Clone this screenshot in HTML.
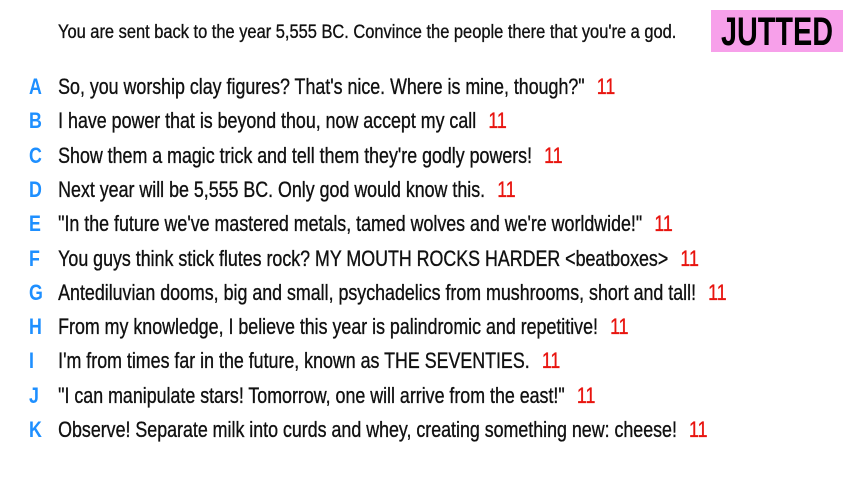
<!DOCTYPE html>
<html><head><meta charset="utf-8"><style>
html,body{margin:0;padding:0;width:853px;height:480px;background:#fff;overflow:hidden}
body{font-family:"Liberation Sans",sans-serif;color:#111;position:relative}
.h{position:absolute;left:58px;top:22px;font-size:19px;white-space:nowrap;transform:scaleX(0.865);transform-origin:0 0;-webkit-text-stroke:0.35px #111}
.b{position:absolute;left:711px;top:10px;width:132px;height:42px;background:#f7a0ea;overflow:hidden}
.b span{position:absolute;left:50%;top:0;font-size:40px;font-weight:bold;line-height:44px;color:#000;transform:translateX(-50%) scaleX(0.72);white-space:nowrap}
.r{position:absolute;left:29px;height:30px;font-size:22px;white-space:nowrap;line-height:30px;transform:scaleX(0.81);transform-origin:0 0;-webkit-text-stroke:0.35px #111}
.l{position:absolute;left:0;color:#1e8fff;font-weight:bold;-webkit-text-stroke:0}
.t{position:absolute;left:36px}
.n{color:#e8140f;margin-left:15px;-webkit-text-stroke:0.35px #e8140f}
</style></head><body>
<div class="h">You are sent back to the year 5,555 BC. Convince the people there that you're a god.</div>
<div class="b"><span>JUTTED</span></div>
<div class="r" style="top:72px"><span class="l">A</span><span class="t">So, you worship clay figures? That's nice. Where is mine, though?"<span class="n">11</span></span></div>
<div class="r" style="top:106px"><span class="l">B</span><span class="t">I have power that is beyond thou, now accept my call<span class="n">11</span></span></div>
<div class="r" style="top:141px"><span class="l">C</span><span class="t">Show them a magic trick and tell them they're godly powers!<span class="n">11</span></span></div>
<div class="r" style="top:175px"><span class="l">D</span><span class="t">Next year will be 5,555 BC. Only god would know this.<span class="n">11</span></span></div>
<div class="r" style="top:209px"><span class="l">E</span><span class="t">"In the future we've mastered metals, tamed wolves and we're worldwide!"<span class="n">11</span></span></div>
<div class="r" style="top:244px"><span class="l">F</span><span class="t">You guys think stick flutes rock? MY MOUTH ROCKS HARDER &lt;beatboxes&gt;<span class="n">11</span></span></div>
<div class="r" style="top:278px"><span class="l">G</span><span class="t">Antediluvian dooms, big and small, psychadelics from mushrooms, short and tall!<span class="n">11</span></span></div>
<div class="r" style="top:312px"><span class="l">H</span><span class="t">From my knowledge, I believe this year is palindromic and repetitive!<span class="n">11</span></span></div>
<div class="r" style="top:346px"><span class="l">I</span><span class="t">I'm from times far in the future, known as THE SEVENTIES.<span class="n">11</span></span></div>
<div class="r" style="top:381px"><span class="l">J</span><span class="t">"I can manipulate stars! Tomorrow, one will arrive from the east!"<span class="n">11</span></span></div>
<div class="r" style="top:415px"><span class="l">K</span><span class="t">Observe! Separate milk into curds and whey, creating something new: cheese!<span class="n">11</span></span></div>
</body></html>
